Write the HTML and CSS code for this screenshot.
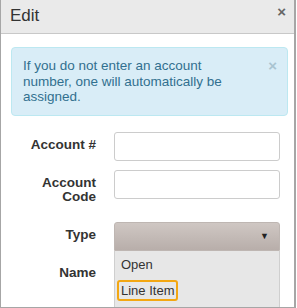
FILE: index.html
```html
<!DOCTYPE html>
<html lang="en">
<head>
    <meta charset="UTF-8">
    <meta name="viewport" content="width=device-width, initial-scale=1.0">
    <title>Edit Account</title>
    <link rel="stylesheet" href="styles.css">
</head>
<body>

<div class="dialog">
    <div class="dialog-header">
        <span class="dialog-title">Edit</span>
        <span class="dialog-close">&times;</span>
    </div>

    <div class="dialog-body">
        <!-- Info alert -->
        <div class="alert-info">
            <span class="alert-text">If you do not enter an account number, one will automatically be assigned.</span>
            <span class="alert-close">&times;</span>
        </div>

        <!-- Form -->
        <div class="form-row">
            <label class="form-label">Account #</label>
            <input type="text" class="form-input">
        </div>
        <div class="form-row">
            <label class="form-label">Account<br>Code</label>
            <input type="text" class="form-input">
        </div>
        <div class="form-row">
            <label class="form-label">Type</label>
            <div class="select-wrap">
                <div class="select-box">
                    <span class="select-arrow">&#9660;</span>
                </div>
                <ul class="select-list">
                    <li>Open</li>
                    <li class="focused">Line Item</li>
                </ul>
            </div>
        </div>
        <div class="form-row">
            <label class="form-label">Name</label>
            <input type="text" class="form-input">
        </div>
    </div>
</div>

</body>
</html>
```

FILE: styles.css
```css
/* Dialog */
body {
    margin: 0;
    font-family: "Liberation Sans", Arial, sans-serif;
    background-color: #fff;
    color: #333;
}

.dialog {
    width: 296px;
    height: 308px;
    box-sizing: border-box;
    border: 1px solid #a6a6a6;
    border-top: none;
    border-right-width: 2px;
    overflow: hidden;
    background-color: #fff;
}

.dialog-header {
    height: 33px;
    display: flex;
    align-items: center;
    justify-content: space-between;
    padding: 0 8px 0 9px;
    background-color: #eaeaea;
    border-bottom: 1px solid #c8c8c8;
}

.dialog-title {
    font-size: 17px;
    color: #333;
    margin-top: -1px;
}

.dialog-close {
    font-size: 15px;
    font-weight: bold;
    color: #666;
    margin-top: -10px;
}

.dialog-body {
    padding: 13px 6px 0 10px;
}

/* Alert */
.alert-info {
    display: flex;
    justify-content: space-between;
    padding: 10px 11px;
    margin-bottom: 16px;
    background-color: #d9edf7;
    border: 1px solid #bce8f1;
    border-radius: 4px;
    color: #31708f;
    font-size: 13.5px;
    line-height: 15.5px;
}

.alert-text {
    width: 215px;
}

.alert-close {
    font-size: 15px;
    font-weight: bold;
    color: #a9c4d1;
    line-height: 12px;
    margin-top: 2px;
    margin-right: -1px;
}

/* Form rows */
.form-row {
    display: flex;
    align-items: flex-start;
    margin-bottom: 9px;
}

.form-label {
    width: 85px;
    margin-right: 18px;
    padding: 6px 0 8px;
    text-align: right;
    font-size: 13.5px;
    font-weight: bold;
    line-height: 14.5px;
    color: #333;
}

.form-input {
    width: 166px;
    height: 29px;
    box-sizing: border-box;
    margin: 0;
    border: 1px solid #ccc;
    border-radius: 3px;
    background-color: #fff;
}

/* Select with open list */
.select-wrap {
    position: relative;
    width: 166px;
}

.select-box {
    height: 29px;
    box-sizing: border-box;
    display: flex;
    align-items: center;
    justify-content: flex-end;
    padding-right: 10px;
    border: 1px solid #beb6b2;
    border-radius: 3px 3px 0 0;
    background: linear-gradient(#cfc7c3, #b8aeaa);
}

.select-arrow {
    font-size: 9px;
    color: #222;
}

.select-list {
    position: absolute;
    top: 29px;
    left: 0;
    width: 166px;
    height: 80px;
    box-sizing: border-box;
    margin: 0;
    padding: 3px 0 0 2px;
    list-style: none;
    display: flex;
    flex-direction: column;
    align-items: flex-start;
    gap: 5px;
    background-color: #e7e7e7;
    border: 1px solid #cfcfcf;
    border-top: none;
}

.select-list li {
    height: 17px;
    padding: 0 2px;
    font-size: 13px;
    line-height: 17px;
    color: #333;
    border: 2px solid transparent;
    border-radius: 3px;
}

.select-list li.focused {
    border-color: #f3a712;
}
```
